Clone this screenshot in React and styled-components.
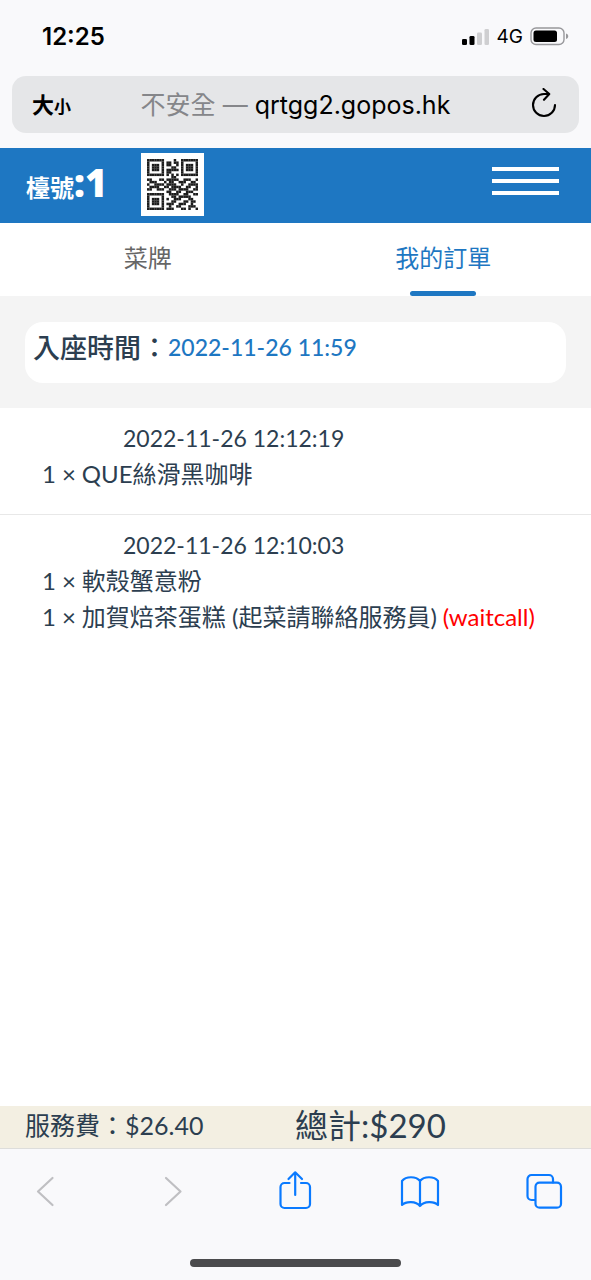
import styled, { createGlobalStyle } from 'styled-components';

const GlobalStyle = createGlobalStyle`
* {
    box-sizing: border-box;
}
body {
    margin: 0;
    background: #ffffff;
    color: #2c3e50;
    font-family: Lato, 'Noto Sans CJK TC', sans-serif;
}
button {
    font: inherit;
    color: inherit;
}
`;

const systemFont = `Inter, 'Noto Sans CJK TC', sans-serif`;

const Page = styled.div`
display: flex;
flex-direction: column;
min-height: 100vh;
`;

const BrowserTop = styled.header`
background: #f9f9fb;
padding-bottom: 15px;
font-family: ${systemFont};
color: #000000;
`;

const StatusBar = styled.div`
display: flex;
align-items: center;
justify-content: space-between;
height: 76px;
padding: 0 22px 3px 42px;
`;

const Clock = styled.time`
font-size: 24px;
font-weight: 600;
`;

const StatusIcons = styled.div`
display: flex;
align-items: center;
gap: 7px;
font-size: 19px;
svg {
    display: block;
}
`;

const AddressBar = styled.div`
display: grid;
grid-template-columns: 40px 1fr 40px;
align-items: center;
height: 57px;
margin: 0 12px;
padding: 0 20px 3px;
border-radius: 14px;
background: #e5e6e8;
`;

const PlainButton = styled.button`
display: flex;
align-items: center;
padding: 0;
border: 0;
background: none;
cursor: pointer;
svg {
    display: block;
}
`;

const TextSizeButton = styled(PlainButton)`
align-items: baseline;
font-size: 22px;
font-weight: 600;
small {
    font-size: 17px;
}
`;

const ReloadButton = styled(PlainButton)`
justify-self: end;
padding-right: 2px;
`;

const Address = styled.div`
font-size: 25px;
text-align: center;
white-space: nowrap;
span {
    color: #85868a;
}
`;

const TableHeader = styled.div`
display: flex;
align-items: center;
height: 75px;
padding: 0 32px 2px 26px;
background: #1e77c2;
color: #ffffff;
`;

const TableName = styled.h1`
width: 115px;
margin: 0;
font-family: 'Noto Sans', 'Noto Sans CJK TC', sans-serif;
font-size: 24px;
font-weight: 700;
line-height: 48px;
strong {
    font-size: 38px;
}
`;

const QrFrame = styled.div`
padding: 6px;
background: #ffffff;
svg {
    display: block;
}
`;

const MenuButton = styled(PlainButton)`
flex-direction: column;
gap: 8px;
width: 67px;
margin-left: auto;
padding-bottom: 7px;
span {
    width: 100%;
    height: 4px;
    background: #ffffff;
}
`;

const Tabs = styled.nav`
display: grid;
grid-template-columns: 1fr 1fr;
height: 73px;
`;

const Tab = styled.a`
display: flex;
flex-direction: column;
align-items: center;
justify-content: space-between;
padding-top: 17px;
font-size: 24px;
line-height: 36px;
text-decoration: none;
color: ${props => props.$active ? '#1e77c2' : '#666666'};
&::after {
    content: '';
    width: 66px;
    height: 5px;
    border-radius: 3px;
    background: ${props => props.$active ? '#1e77c2' : 'transparent'};
}
`;

const SeatedSection = styled.section`
padding: 26px 25px 25px;
background: #f4f4f4;
`;

const SeatedCard = styled.div`
display: flex;
align-items: center;
height: 61px;
padding: 0 8px 12px;
border-radius: 18px;
background: #ffffff;
font-size: 27px;
font-weight: 500;
time {
    font-size: 23px;
    color: #1e77c2;
}
`;

const Order = styled.section`
padding: 12px 42px 22px;
border-bottom: 1px solid ${props => props.$last ? 'transparent' : '#e8e8e8'};
`;

const OrderTime = styled.h2`
margin: 0;
padding-left: 81px;
font-size: 23px;
font-weight: 400;
line-height: 36px;
`;

const ItemList = styled.ul`
margin: 0;
padding: 0;
list-style: none;
`;

const Item = styled.li`
display: flex;
gap: 6px;
font-size: 24px;
line-height: 36px;
white-space: nowrap;
`;

const Note = styled.span`
color: #ff0000;
`;

const Totals = styled.div`
display: grid;
grid-template-columns: 1fr 1fr;
align-items: center;
height: 43px;
margin-top: auto;
padding: 0 0 3px 25px;
border-bottom: 1px solid #dddddb;
background: #f3efe2;
font-size: 25px;
line-height: 39px;
`;

const GrandTotal = styled.span`
margin-left: -13px;
font-size: 33px;
`;

const BrowserBottom = styled.footer`
display: flex;
flex-direction: column;
align-items: center;
justify-content: space-between;
height: 131px;
padding: 21px 27px 13px 26px;
background: #f9f9fb;
`;

const Toolbar = styled.div`
display: flex;
align-items: center;
justify-content: space-between;
width: 100%;
color: #0a7aff;
`;

const NavButton = styled(PlainButton)`
&:disabled {
    color: #bfbfc2;
    cursor: default;
}
`;

const HomeIndicator = styled.div`
width: 211px;
height: 8px;
border-radius: 4px;
background: #4b4b4d;
`;

const qrRows = [
    '111111100001001111111',
    '100000101101101000001',
    '101110101100101011101',
    '101110100011001011101',
    '101110101111101011101',
    '100000101100001000001',
    '111111101010101111111',
    '000000000011000000000',
    '110001101111100111001',
    '011100010110011100110',
    '100111101111001001111',
    '011110011011110011001',
    '110011100111011110011',
    '000000001100110011100',
    '111111100111100110011',
    '100000100011011111000',
    '101110101001110001100',
    '101110100011000110110',
    '101110101110011100100',
    '100000100100110001110',
    '111111101110001101001',
];

const orders = [
    {
        time: '2022-11-26 12:12:19',
        items: [{ quantity: 1, name: 'QUE絲滑黑咖啡' }],
    },
    {
        time: '2022-11-26 12:10:03',
        items: [
            { quantity: 1, name: '軟殼蟹意粉' },
            { quantity: 1, name: '加賀焙茶蛋糕 (起菜請聯絡服務員)', note: '(waitcall)' },
        ],
    },
];

const SignalIcon = () => (
    <svg width="28" height="18" viewBox="0 0 28 18" aria-hidden="true">
        <rect x="0" y="11" width="5" height="6" rx="1.3" fill="#000" />
        <rect x="7.5" y="8" width="5" height="9" rx="1.3" fill="#000" />
        <rect x="15" y="4.5" width="5" height="12.5" rx="1.3" fill="#cfcfd1" />
        <rect x="22.5" y="1" width="4.5" height="16" rx="1.3" fill="#cfcfd1" />
    </svg>
);

const BatteryIcon = () => (
    <svg width="39" height="19" viewBox="0 0 39 19" aria-hidden="true">
        <rect x="1" y="1" width="33" height="16.5" rx="5" fill="none" stroke="#98989b" strokeWidth="1.4" />
        <rect x="3.5" y="3.5" width="23.5" height="11.5" rx="2.5" fill="#000" />
        <path d="M36 6.500c3 .8 3 4.700 0 5.500z" fill="#98989b" />
    </svg>
);

const ReloadIcon = () => (
    <svg width="26" height="30" viewBox="0 0 26 30" fill="none" stroke="#000" strokeWidth="2.1" strokeLinecap="round" strokeLinejoin="round" aria-hidden="true">
        <path d="M24 17a11 11 0 1 1-11-11h5M12.5 1l5.8 5-5.3 5.8" />
    </svg>
);

const ToolbarIcon = ({ children }) => (
    <svg width="40" height="42" viewBox="0 0 40 42" fill="none" stroke="currentColor" strokeWidth="2.2" strokeLinecap="round" strokeLinejoin="round" aria-hidden="true">
        {children}
    </svg>
);

const BackIcon = () => (
    <ToolbarIcon>
        <path d="M26.5 8L12 21.5 26.5 35" />
    </ToolbarIcon>
);

const ForwardIcon = () => (
    <ToolbarIcon>
        <path d="M15 8l14.5 13.500L15 35" />
    </ToolbarIcon>
);

const ShareIcon = () => (
    <ToolbarIcon>
        <path d="M14.5 13h-5a4 4 0 0 0-4 4v17a4 4 0 0 0 4 4H31a4 4 0 0 0 4-4V17a4 4 0 0 0-4-4h-5" />
        <path d="M20.2 25V2.5M13.5 9l6.700-6.700L27 9" />
    </ToolbarIcon>
);

const BookIcon = () => (
    <ToolbarIcon>
        <path d="M20 11v25M20 11C16 6 6 6 2 11v24c4-4 14-4 18 1 4-5 14-5 18-1V11c-4-5-14-5-18 0z" />
    </ToolbarIcon>
);

const TabsIcon = () => (
    <ToolbarIcon>
        <path d="M11 30H7.500a4 4 0 0 1-4-4V9a4 4 0 0 1 4-4H25a4 4 0 0 1 4 4v3.500" />
        <rect x="11.5" y="12.7" width="25.5" height="25" rx="4" />
    </ToolbarIcon>
);

const QrCode = () => (
    <QrFrame>
        <svg width="51" height="51" viewBox="0 0 21 21" role="img" aria-label="QR code">
            {qrRows.map((row, y) => row.split('').map((cell, x) => (
                cell === '1' && <rect key={`${x}-${y}`} x={x} y={y} width="1.03" height="1.03" fill="#1c1c1c" />
            )))}
        </svg>
    </QrFrame>
);

function App() {
    return (
        <Page>
            <GlobalStyle />
            <BrowserTop>
                <StatusBar>
                    <Clock>12:25</Clock>
                    <StatusIcons>
                        <SignalIcon />
                        4G
                        <BatteryIcon />
                    </StatusIcons>
                </StatusBar>
                <AddressBar>
                    <TextSizeButton>大<small>小</small></TextSizeButton>
                    <Address><span>不安全 — </span>qrtgg2.gopos.hk</Address>
                    <ReloadButton aria-label="重新載入"><ReloadIcon /></ReloadButton>
                </AddressBar>
            </BrowserTop>

            <TableHeader>
                <TableName>檯號<strong>:1</strong></TableName>
                <QrCode />
                <MenuButton aria-label="選單">
                    <span />
                    <span />
                    <span />
                </MenuButton>
            </TableHeader>

            <Tabs>
                <Tab href="#menu">菜牌</Tab>
                <Tab href="#orders" $active>我的訂單</Tab>
            </Tabs>

            <SeatedSection>
                <SeatedCard>
                    入座時間：<time>2022-11-26 11:59</time>
                </SeatedCard>
            </SeatedSection>

            <main>
                {orders.map((order, index) => (
                    <Order key={order.time} $last={index === orders.length - 1}>
                        <OrderTime>{order.time}</OrderTime>
                        <ItemList>
                            {order.items.map(item => (
                                <Item key={item.name}>
                                    <span>{item.quantity}</span>
                                    <span>×</span>
                                    <span>{item.name}</span>
                                    {item.note && <Note>{item.note}</Note>}
                                </Item>
                            ))}
                        </ItemList>
                    </Order>
                ))}
            </main>

            <Totals>
                <span>服務費：$26.40</span>
                <GrandTotal>總計:$290</GrandTotal>
            </Totals>

            <BrowserBottom>
                <Toolbar>
                    <NavButton disabled aria-label="返回"><BackIcon /></NavButton>
                    <NavButton disabled aria-label="前進"><ForwardIcon /></NavButton>
                    <NavButton aria-label="分享"><ShareIcon /></NavButton>
                    <NavButton aria-label="書籤"><BookIcon /></NavButton>
                    <NavButton aria-label="分頁"><TabsIcon /></NavButton>
                </Toolbar>
                <HomeIndicator />
            </BrowserBottom>
        </Page>
    );
}

export default App
